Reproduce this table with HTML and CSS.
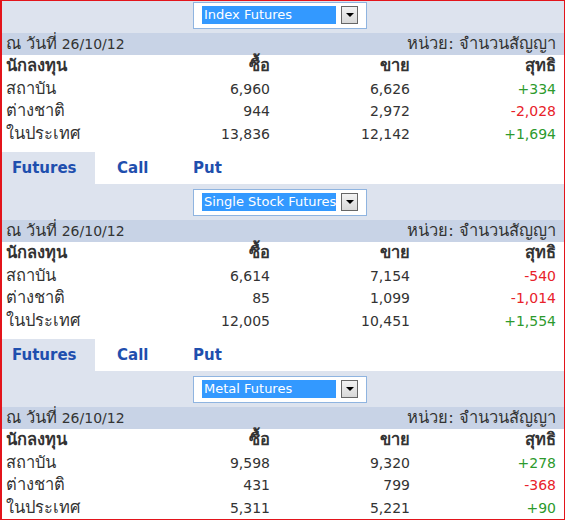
FILE: index.html
```html
<!DOCTYPE html>
<html lang="th">
<head>
<meta charset="utf-8">
<link rel="stylesheet" href="styles.css">
</head>
<body>
<div class="frame">
  <div class="inner">
    <section class="block">
      <div class="selband"><div class="selbox"><span class="selval">Index Futures</span><span class="selbtn"><span class="tri"></span></span></div></div>
      <div class="dateband"><span><span class="th">ณ วันที่</span> 26/10/12</span><span class="th">หน่วย: จำนวนสัญญา</span></div>
      <div class="table">
        <div class="row head"><span class="th">นักลงทุน</span><span class="num th">ซื้อ</span><span class="num th">ขาย</span><span class="num th">สุทธิ</span></div>
        <div class="row"><span class="th">สถาบัน</span><span class="num">6,960</span><span class="num">6,626</span><span class="num up">+334</span></div>
        <div class="row"><span class="th">ต่างชาติ</span><span class="num">944</span><span class="num">2,972</span><span class="num down">-2,028</span></div>
        <div class="row"><span class="th">ในประเทศ</span><span class="num">13,836</span><span class="num">12,142</span><span class="num up">+1,694</span></div>
      </div>
      <div class="tabs"><span class="tab active">Futures</span><span class="tab">Call</span><span class="tab">Put</span></div>
    </section>
    <section class="block">
      <div class="selband"><div class="selbox"><span class="selval">Single Stock Futures</span><span class="selbtn"><span class="tri"></span></span></div></div>
      <div class="dateband"><span><span class="th">ณ วันที่</span> 26/10/12</span><span class="th">หน่วย: จำนวนสัญญา</span></div>
      <div class="table">
        <div class="row head"><span class="th">นักลงทุน</span><span class="num th">ซื้อ</span><span class="num th">ขาย</span><span class="num th">สุทธิ</span></div>
        <div class="row"><span class="th">สถาบัน</span><span class="num">6,614</span><span class="num">7,154</span><span class="num down">-540</span></div>
        <div class="row"><span class="th">ต่างชาติ</span><span class="num">85</span><span class="num">1,099</span><span class="num down">-1,014</span></div>
        <div class="row"><span class="th">ในประเทศ</span><span class="num">12,005</span><span class="num">10,451</span><span class="num up">+1,554</span></div>
      </div>
      <div class="tabs"><span class="tab active">Futures</span><span class="tab">Call</span><span class="tab">Put</span></div>
    </section>
    <section class="block">
      <div class="selband"><div class="selbox"><span class="selval">Metal Futures</span><span class="selbtn"><span class="tri"></span></span></div></div>
      <div class="dateband"><span><span class="th">ณ วันที่</span> 26/10/12</span><span class="th">หน่วย: จำนวนสัญญา</span></div>
      <div class="table">
        <div class="row head"><span class="th">นักลงทุน</span><span class="num th">ซื้อ</span><span class="num th">ขาย</span><span class="num th">สุทธิ</span></div>
        <div class="row"><span class="th">สถาบัน</span><span class="num">9,598</span><span class="num">9,320</span><span class="num up">+278</span></div>
        <div class="row"><span class="th">ต่างชาติ</span><span class="num">431</span><span class="num">799</span><span class="num down">-368</span></div>
        <div class="row"><span class="th">ในประเทศ</span><span class="num">5,311</span><span class="num">5,221</span><span class="num up">+90</span></div>
      </div>
    </section>
  </div>
</div>
</body>
</html>
```
FILE: styles.css
```css
html, body {
  margin: 0;
  padding: 0;
  background: #fff;
}
.frame {
  width: 565px;
  height: 520px;
  box-sizing: border-box;
  border: 1px solid #e3141b;
  border-left-width: 2px;
  overflow: hidden;
  font-family: Tahoma, "DejaVu Sans", "Noto Sans", sans-serif;
  font-size: 14px;
  color: #333;
}
.th {
  font-size: 16.5px;
}
.inner {
  margin-top: -4px;
}
.selband {
  height: 36px;
  background: #dde3ee;
  display: flex;
  align-items: center;
  padding-left: 191px;
}
.selbox {
  width: 174px;
  height: 27px;
  box-sizing: border-box;
  border: 1px solid #8fb4e0;
  background: #fff;
  display: flex;
  align-items: center;
  padding-left: 8px;
  gap: 5px;
}
.selval {
  width: 134px;
  height: 18px;
  background: #3399ff;
  color: #fff;
  font-size: 13px;
  line-height: 18px;
  padding-left: 2px;
  box-sizing: border-box;
  white-space: nowrap;
  overflow: hidden;
}
.selbtn {
  width: 17px;
  height: 18px;
  box-sizing: border-box;
  border: 1px solid #666;
  background: linear-gradient(#f2f2f2, #d8d8d8);
  display: flex;
  align-items: center;
  justify-content: center;
}
.tri {
  width: 0;
  height: 0;
  border-left: 4px solid transparent;
  border-right: 4px solid transparent;
  border-top: 4px solid #000;
}
.dateband {
  height: 22px;
  background: #c8d3e6;
  display: flex;
  justify-content: space-between;
  align-items: baseline;
  padding: 0 8px 0 4px;
  line-height: 22px;
}
.table {
  padding: 0 8px 0 4px;
}
.row {
  display: grid;
  grid-template-columns: 130px 134px 140px 1fr;
  height: 22.5px;
  line-height: 22px;
  align-items: baseline;
}
.row .num {
  text-align: right;
}
.head {
  font-weight: bold;
}
.up { color: #2d9a2d; }
.down { color: #e8222a; }
.tabs {
  display: flex;
  height: 32px;
  margin-top: 7px;
  align-items: stretch;
}
.tab {
  display: flex;
  align-items: center;
  font-weight: bold;
  font-size: 15px;
  color: #1f4fae;
  padding-left: 22px;
  width: 76px;
  box-sizing: border-box;
}
.tab.active {
  background: #dde3ee;
  padding-left: 10px;
  width: 93px;
}
```
